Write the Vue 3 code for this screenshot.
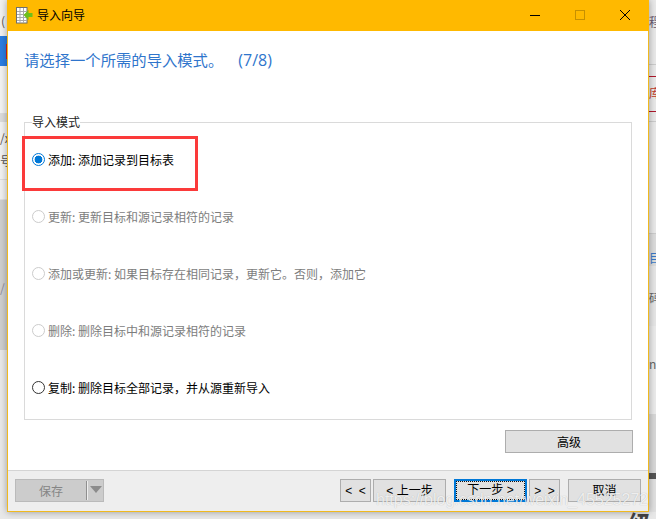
<script setup>
const modes = [
  { id: 'add', label: '添加: 添加记录到目标表', state: 'selected' },
  { id: 'update', label: '更新: 更新目标和源记录相符的记录', state: 'disabled' },
  { id: 'merge', label: '添加或更新: 如果目标存在相同记录，更新它。否则，添加它', state: 'disabled' },
  { id: 'delete', label: '删除: 删除目标中和源记录相符的记录', state: 'disabled' },
  { id: 'copy', label: '复制: 删除目标全部记录，并从源重新导入', state: 'enabled' },
]
</script>

<template>
  <div class="desktop">
    <div class="strip left">
      <div class="l a">(</div>
      <div class="l b"><i></i></div>
      <div class="l c"></div>
      <div class="l d"></div>
      <div class="l e">/x<br />号</div>
      <div class="l f"></div>
      <div class="l g">/</div>
      <div class="l h"></div>
    </div>

    <section class="window">
      <header class="titlebar">
        <svg class="app-icon" width="17" height="17" viewBox="0 0 17 17">
          <rect x="0.5" y="0.5" width="10.5" height="15.5" fill="#fff" stroke="#6f6f6f" />
          <path d="M1 4.500h10M1 7.500h10M1 10.500h10M1 13.500h10M4 1v15M7.500 1v15" stroke="#a9a9a9" fill="none" />
          <path d="M16.500 6H12.500V3L7.500 8l5 5v-3H16.500z" fill="#6fbf1a" />
        </svg>
        <span class="title">导入向导</span>
        <div class="controls">
          <svg width="12" height="12" viewBox="0 0 12 12"><path d="M1 6.500h10" stroke="#000" /></svg>
          <svg width="12" height="12" viewBox="0 0 12 12"><rect x="1.500" y="1.500" width="9" height="9" fill="none" stroke="#c79000" /></svg>
          <svg width="12" height="12" viewBox="0 0 12 12"><path d="M1 1l10 10M11 1L1 11" stroke="#000" fill="none" /></svg>
        </div>
      </header>

      <main class="content">
        <h1 class="heading">请选择一个所需的导入模式。<span class="step">(7/8)</span></h1>
        <fieldset class="group">
          <legend>导入模式</legend>
          <div v-for="mode in modes" :key="mode.id" class="row" :class="mode.state">
            <span class="radio"></span>
            <span>{{ mode.label }}</span>
          </div>
        </fieldset>
        <div class="advanced-row">
          <button class="btn advanced">高级</button>
        </div>
        <div class="annotation"></div>
      </main>

      <footer class="footer">
        <div class="save">
          <span class="save-label">保存</span>
          <span class="save-arrow"></span>
        </div>
        <div class="nav">
          <button class="btn small">&lt; &lt;</button>
          <button class="btn wide">&lt; 上一步</button>
          <button class="btn wide primary"><span class="focus">下一步 &gt;</span></button>
          <button class="btn small">&gt; &gt;</button>
          <button class="btn wide">取消</button>
        </div>
      </footer>
      <div class="watermark">https://blog.csdn.net/weixin_45525272</div>
    </section>

    <div class="strip right">
      <div class="r a">程</div>
      <div class="r b">库</div>
      <div class="r c"></div>
      <div class="r d">目</div>
      <div class="r e">码</div>
      <div class="r f">na</div>
      <div class="r g"></div>
    </div>
    <div class="bottom"><span class="glyph">级</span></div>
  </div>
</template>

<style>
html, body { margin: 0; background: #e8e8e8; }
</style>

<style scoped>
.desktop {
  width: 656px;
  height: 519px;
  overflow: hidden;
  display: grid;
  grid-template-columns: 7px 642px 7px;
  grid-template-rows: 512px 7px;
  font-family: "Noto Sans CJK SC", "Liberation Sans", sans-serif;
  font-size: 12px;
  color: #000;
  background: #e8e8e8;
}
.strip { overflow: hidden; display: flex; flex-direction: column; white-space: nowrap; color: #555; }
.l { box-sizing: border-box; }
.l.a { height: 36px; background: #f1f1f1; padding: 13px 0 0 1px; line-height: 16px; }
.l.b { height: 30px; background: #2a7de1; display: flex; justify-content: flex-end; align-items: center; }
.l.b i { width: 1px; height: 15px; background: #d42020; }
.l.c { height: 48px; background: #f3f3f3; border-top: 1px solid #f3f3f3; border-bottom: 1px solid #ddd; }
.l.d { height: 8px; background: #dcdcdc; }
.l.e { height: 58px; background: #f2f2f2; padding-top: 4px; line-height: 23px; border-bottom: 1px solid #ddd; }
.l.f { height: 20px; background: #f0f0f0; border-bottom: 1px solid #e0e0e0; }
.l.g { height: 150px; background: #cfcfcf; color: #8a8a9a; padding-top: 80px; line-height: 16px; }
.l.h { flex: 1; background: #e9e9e9; }

.window {
  position: relative;
  z-index: 1;
  box-sizing: border-box;
  display: flex;
  flex-direction: column;
  background: #fff;
  border: 1px solid #f0b91f;
  border-top: 0;
  box-shadow: 0 0 7px rgba(0, 0, 0, .35);
}
.titlebar {
  height: 31px;
  flex: none;
  margin: 0 -1px 0 -1px;
  background: #ffb900;
  display: flex;
  align-items: center;
  padding-left: 9px;
}
.app-icon { margin-right: 4px; }
.title { line-height: 16px; margin-top: -1px; }
.controls {
  margin-left: auto;
  display: flex;
  gap: 33px;
  padding-right: 18px;
  margin-top: -1px;
}
.content { position: relative; flex: 1; min-height: 0; padding: 0 16px; }
.heading {
  margin: 17px 0 0;
  font-size: 15.33px;
  font-weight: 400;
  line-height: 22px;
  color: #2f75cc;
  white-space: pre;
}
.step { margin-left: 15px; font-family: "Open Sans", sans-serif; font-size: 16px; }
.group {
  box-sizing: border-box;
  width: 608px;
  height: 306px;
  margin: 43px 0 0;
  padding: 1px 0 0;
  border: 1px solid #dadada;
}
.group legend { padding: 0; margin-left: 7px; font-size: 12px; line-height: 16px; color: #222; background: #fff; }
.row { height: 57px; display: flex; align-items: center; gap: 3px; padding-left: 7px; }
.radio { box-sizing: border-box; width: 13px; height: 13px; border-radius: 50%; border: 1px solid #333; background: #fff; flex: none; }
.row.disabled { color: #7d7d7d; }
.row.disabled .radio { border-color: #cccccc; }
.row.enabled .radio { border-color: #333; border-width: 1.5px; }
.row.selected .radio { border-color: #0078d7; background: radial-gradient(circle, #0078d7 0 3.6px, #fff 4.2px); }
.advanced-row { display: flex; justify-content: flex-end; margin-right: -1px; margin-top: 10px; }
.btn {
  box-sizing: border-box;
  height: 23px;
  padding: 0;
  font: inherit;
  color: #000;
  line-height: 16px;
  background: #e1e1e1;
  border: 1px solid #adadad;
  border-radius: 0;
}
.nav .btn { font-family: "Liberation Sans", "Noto Sans CJK SC", sans-serif; }
.advanced { width: 128px; }
.annotation {
  position: absolute;
  left: 14px;
  top: 105px;
  width: 176px;
  height: 55px;
  box-sizing: border-box;
  border: 3px solid #fb3a3a;
}
.footer {
  height: 41px;
  flex: none;
  box-sizing: border-box;
  background: #eeeeee;
  border-top: 1px solid #d4d4d4;
  display: flex;
  align-items: flex-start;
  justify-content: space-between;
  padding: 8px 7px 0;
}
.save {
  box-sizing: border-box;
  width: 89px;
  height: 23px;
  background: #cccccc;
  border: 1px solid #bababa;
  display: flex;
  align-items: center;
}
.save-label { width: 71px; text-align: center; color: #858585; line-height: 16px; }
.save-arrow {
  position: relative;
  height: 19px;
  width: 16px;
  border-left: 1px solid #8f8f8f;
  box-shadow: inset 1px 0 0 #eee;
}
.save-arrow::after {
  content: "";
  position: absolute;
  left: 3px;
  top: 5px;
  border-style: solid;
  border-width: 7px 6px 0;
  border-color: #8c8c8c transparent transparent;
}
.nav { display: flex; gap: 2px; word-spacing: 2px; }
.small { width: 31px; word-spacing: 3px; }
.wide { width: 73px; }
.nav .btn:nth-child(2), .nav .btn:nth-child(4) { margin-right: 6px; }
.primary { border: 2px solid #0078d7; }
.focus {
  display: block;
  height: 100%;
  box-sizing: border-box;
  border: 1px dotted #111;
  line-height: 17px;
}
.watermark {
  position: absolute;
  z-index: 2;
  left: 368px;
  top: 490px;
  font-family: "Liberation Sans", sans-serif;
  font-size: 16px;
  line-height: 20px;
  color: rgba(255, 255, 255, .8);
  text-shadow: 0 0 1px rgba(0, 0, 0, .25);
  white-space: nowrap;
}
.r { box-sizing: border-box; flex: none; }
.r.a { height: 65px; background: #e9e9e9; padding-top: 14px; line-height: 16px; color: #6a5a70; border-bottom: 1px solid #ccc; }
.r.b {
  height: 57px;
  padding-top: 20px;
  line-height: 16px;
  color: #c23a2a;
  background-color: #e9e9e9;
  background-image: linear-gradient(#b0182c, #b0182c), linear-gradient(#b0182c, #b0182c), linear-gradient(#ccc, #ccc);
  background-size: 100% 1px;
  background-repeat: no-repeat;
  background-position: 0 11px, 0 46px, 0 56px;
}
.r.c { height: 112px; background: #e9e9e9; border-bottom: 1px solid #ccc; }
.r.d { height: 32px; background: #dcdcdc; color: #3a7ac8; padding-top: 16px; line-height: 16px; }
.r.e { height: 60px; background: #e6e6e6; color: #666; line-height: 16px; padding-top: 24px; }
.r.f { height: 88px; background: #ebebeb; color: #666; line-height: 16px; padding-top: 30px; }
.r.g { flex: 1; background: linear-gradient(#d8d8d8 0 60%, #555 60% 66%, #e0e0e0 66%); }
.bottom { grid-column: 1 / 4; background: #e8e8e8; position: relative; overflow: hidden; }
.glyph { position: absolute; right: 4px; top: -3px; font-size: 24px; line-height: 28px; color: #444; font-weight: 700; }
</style>
